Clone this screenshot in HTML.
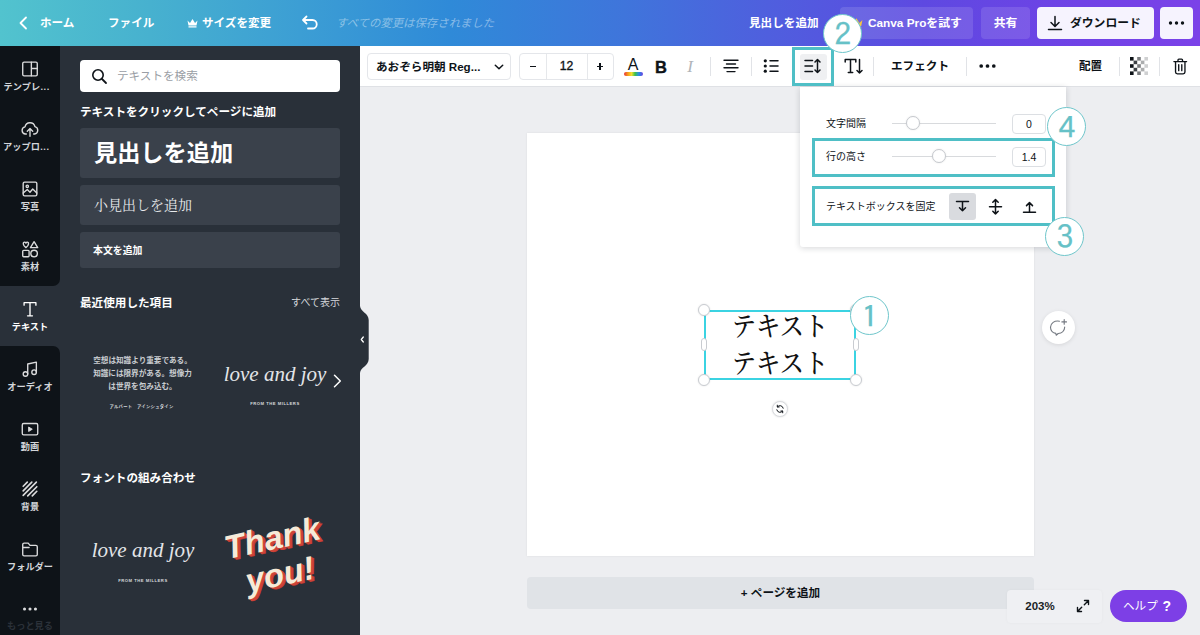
<!DOCTYPE html>
<html lang="ja">
<head>
<meta charset="utf-8">
<title>Canva</title>
<style>
*{box-sizing:border-box;margin:0;padding:0}
html,body{width:1200px;height:635px;overflow:hidden;background:#edeef1}
body{position:relative;font-family:"Liberation Sans","Noto Sans CJK JP",sans-serif;color:#0e1318;-webkit-font-smoothing:antialiased}
.abs{position:absolute}
.b{font-weight:700}
/* header */
#hdr{position:absolute;left:0;top:0;width:1200px;height:46px;background:linear-gradient(90deg,#52c3ce 0%,#47b1cf 12.5%,#3c9ed4 25%,#2f8ad8 37.5%,#3f75db 52%,#4f5fde 64%,#5e49e1 77%,#7042e6 90%,#7b42e8 100%)}
#hdr .t{position:absolute;top:0;height:46px;line-height:46px;color:#fff;font-size:11.6px;font-weight:700;white-space:nowrap}
.hbtn{position:absolute;top:7px;height:32px;border-radius:4px;background:rgba(255,255,255,.12);color:#fff;font-size:11.8px;font-weight:700;line-height:32px;white-space:nowrap}
.hbtn.w{background:#f6f3fe;color:#0e1318}
/* left nav */
#nav{position:absolute;left:0;top:46px;width:60px;height:589px;background:#293039}
#nav .dk{position:absolute;left:0;width:60px;background:#0e1318}
#nav .it{position:absolute;left:0;width:60px;height:60px;text-align:center;color:#d3d6da;font-size:9.200px;font-weight:700}
#nav .it .lb{position:absolute;left:0;width:60px;top:33.500px;line-height:14px;white-space:nowrap}
#nav .it.sel{color:#fff}
#nav .it svg{opacity:.85}
#nav .it.sel svg{opacity:1}
#nav .it svg{position:absolute;left:20px;top:13px;width:20px;height:20px}

/* side panel */
#side{position:absolute;left:60px;top:46px;width:300px;height:589px;background:#293039;color:#fff}
.card{position:absolute;left:20px;width:260px;background:#3a414b;border-radius:3px}
/* toolbar */
#tb{position:absolute;left:360px;top:46px;width:840px;height:41px;background:#fff;border-bottom:1px solid #dfe1e5}
.dv{position:absolute;top:11px;width:1px;height:19px;background:#e1e3e7}
.tt{position:absolute;top:0;height:40px;line-height:40px;font-size:12px;font-weight:700;white-space:nowrap}
/* canvas */
#page{position:absolute;left:527px;top:133px;width:507px;height:423px;background:#fff;box-shadow:0 0 2px rgba(0,0,0,.08)}
.circ{position:absolute;width:39px;height:39px;border-radius:50%;background:#fff;border:1.3px solid #6fc6cb;color:#66c1c7;text-align:center;font-size:31px;line-height:40px;font-weight:400;font-family:"IPAGothic",sans-serif;-webkit-text-stroke:.25px #66c1c7}
.circ span{display:inline-block;transform:scaleX(1.08)}
.hl{position:absolute;border:3px solid #4fbfc6}
.hd{position:absolute;width:12px;height:12px;border-radius:50%;background:#fff;border:1px solid #c9ccd1;box-shadow:0 0 2px rgba(0,0,0,.12)}
.hp{position:absolute;width:6px;height:13px;border-radius:3px;background:#fff;border:1px solid #c9ccd1}
.kn{position:absolute;width:14px;height:14px;border-radius:50%;background:#fff;border:1px solid #c6c9ce;box-shadow:0 0 2px rgba(0,0,0,.1)}
.vb{position:absolute;width:34px;height:20px;border:1px solid #dcdfe3;border-radius:4px;text-align:center;line-height:18px;font-size:10.500px;font-family:"Liberation Sans",sans-serif}
</style>
</head>
<body>

<!-- canvas area -->
<div id="page"></div>

<!-- selected text box -->
<div class="abs" style="left:704px;top:310px;width:152px;height:70px;border:2px solid #3bd3e2"></div>
<div class="abs" style="left:704px;top:308.500px;width:152px;text-align:center;font-family:'Liberation Serif','Noto Serif CJK SC',serif;font-size:27px;font-weight:500;line-height:37.500px;color:#111;white-space:nowrap;transform:scaleX(.9)">テキスト<br>テキスト</div>
<div class="hd" style="left:698px;top:304px"></div><div class="hd" style="left:850px;top:304px"></div>
<div class="hd" style="left:698px;top:374px"></div><div class="hd" style="left:850px;top:374px"></div>
<div class="hp" style="left:701px;top:338px"></div><div class="hp" style="left:853px;top:338px"></div>
<!-- rotate handle -->
<div class="abs" style="left:772px;top:401px;width:16px;height:16px;border-radius:50%;background:#fff;border:1px solid #d9dbdf;box-shadow:0 0 2px rgba(0,0,0,.15)">
  <svg class="abs" style="left:2px;top:2px" width="10" height="10" viewBox="0 0 10 10"><path d="M8.200 4.200A3.300 3.300 0 0 0 2.500 2.800 M1.800 5.800A3.300 3.300 0 0 0 7.500 7.200 M2.300 1.200V3H4.100 M7.700 8.800V7H5.900" fill="none" stroke="#0e1318" stroke-width="1" stroke-linecap="round" stroke-linejoin="round"/></svg>
</div>
<!-- comment button -->
<div class="abs" style="left:1041.500px;top:310.500px;width:33px;height:33px;border-radius:50%;background:#fff;box-shadow:0 1px 4px rgba(0,0,0,.10)">
  <svg class="abs" style="left:7px;top:7px" width="19" height="19" viewBox="0 0 19 19"><path d="M10.500 3.200C5.500 2.300 1.500 5.200 1.500 9.300C1.500 12.800 4.200 15 6.800 15.400L7.200 17.200L9.200 15.500C12.800 15.300 15.600 12.800 15.700 9" fill="none" stroke="#747981" stroke-width="1.150" stroke-linecap="round" stroke-linejoin="round"/><path d="M15.200 1.600V6.200 M12.900 3.900H17.500" stroke="#747981" stroke-width="1.150" stroke-linecap="round"/></svg>
</div>

<!-- add page -->
<div class="abs b" style="left:527px;top:577px;width:507px;height:32px;border-radius:4px;background:#e0e3e7;text-align:center;line-height:32px;font-size:11.600px">+ ページを追加</div>
<!-- zoom -->
<div class="abs" style="left:1006.500px;top:589.500px;width:95.500px;height:33px;border-radius:4px;background:#eff0f3;box-shadow:0 0 3px rgba(0,0,0,.04)">
  <div class="abs" style="left:15.500px;top:0;width:36px;text-align:center;line-height:33px;font-size:11.500px;font-weight:700;color:#1a1f25">203%</div>
  <svg class="abs" style="left:69px;top:9.500px" width="14" height="14" viewBox="0 0 14 14"><path d="M8.500 1.500H12.500V5.500 M12.500 1.500L8.300 5.700 M5.500 12.500H1.500V8.500 M1.500 12.500L5.700 8.300" fill="none" stroke="#0e1318" stroke-width="1.400" stroke-linecap="round" stroke-linejoin="round"/></svg>
</div>
<!-- help -->
<div class="abs" style="left:1110px;top:590px;width:77px;height:32px;border-radius:16px;background:#7d3fe6;color:#fff">
  <div class="abs" style="left:13px;top:0;line-height:32px;font-size:11.600px;white-space:nowrap">ヘルプ</div>
  <div class="abs b" style="left:52.500px;top:0;line-height:32px;font-size:14px;font-family:'Liberation Sans',sans-serif">?</div>
</div>

<!-- header -->
<div id="hdr">
  <svg class="abs" style="left:18px;top:16px" width="10" height="14" viewBox="0 0 10 14"><path d="M8 1.5L2.5 7L8 12.5" fill="none" stroke="#fff" stroke-width="1.8" stroke-linecap="round" stroke-linejoin="round"/></svg>
  <div class="t" style="left:40px">ホーム</div>
  <div class="t" style="left:108px">ファイル</div>
  <svg class="abs" style="left:187px;top:18px" width="11" height="10" viewBox="0 0 11 10"><path d="M0.5 2.5L3 5L5.5 1L8 5L10.5 2.5L9.5 7.5H1.5Z M1.5 8.3H9.5V9.5H1.5Z" fill="#fff"/></svg>
  <div class="t" style="left:202px">サイズを変更</div>
  <svg class="abs" style="left:301px;top:15px" width="18" height="16" viewBox="0 0 18 16"><path d="M5.5 1.5L2 5L5.5 8.5 M2.5 5H11.5A4.2 4.2 0 0 1 11.5 13.5H7" fill="none" stroke="#fff" stroke-width="1.8" stroke-linecap="round" stroke-linejoin="round"/></svg>
  <div class="t" style="left:336px;font-size:11.4px;font-weight:400;font-style:italic;color:rgba(255,255,255,.42)">すべての変更は保存されました</div>
  <div class="t" style="left:749px">見出しを追加</div>
  <div class="hbtn" style="left:840px;width:133px"><svg class="abs" style="left:10px;top:10px" width="13" height="12" viewBox="0 0 11 10"><path d="M0.5 2.5L3 5L5.5 1L8 5L10.5 2.5L9.5 7.5H1.5Z M1.5 8.3H9.5V9.5H1.5Z" fill="#f8c63d"/></svg><span class="abs" style="left:28px">Canva Proを試す</span></div>
  <div class="hbtn" style="left:981px;width:49px;text-align:center">共有</div>
  <div class="hbtn w" style="left:1037px;width:117px"><svg class="abs" style="left:10px;top:8px" width="16" height="16" viewBox="0 0 16 16"><path d="M8 1.5V11 M4 7.5L8 11.5L12 7.5 M1.5 14.5H14.5" fill="none" stroke="#0e1318" stroke-width="1.5" stroke-linecap="round" stroke-linejoin="round"/></svg><span class="abs" style="left:33px">ダウンロード</span></div>
  <div class="hbtn w" style="left:1160px;width:33px"><svg class="abs" style="left:8px;top:14px" width="17" height="4" viewBox="0 0 17 4"><circle cx="2.5" cy="2" r="1.7" fill="#0e1318"/><circle cx="8.5" cy="2" r="1.7" fill="#0e1318"/><circle cx="14.5" cy="2" r="1.7" fill="#0e1318"/></svg></div>
</div>

<!-- nav -->
<div id="nav">
  <div class="dk" style="top:0;height:240px;border-radius:0 0 7px 0"></div>
  <div class="dk" style="top:300px;height:289px;border-radius:0 7px 0 0"></div>
  <div class="it" style="top:0px"><svg viewBox="0 0 22 22"><rect x="3" y="3.5" width="16" height="15" rx="1.5" fill="none" stroke="#fff" stroke-width="1.5" stroke-linecap="round" stroke-linejoin="round"/><path d="M12.5 3.5V18.5 M12.5 10.5H19" fill="none" stroke="#fff" stroke-width="1.5" stroke-linecap="round" stroke-linejoin="round"/></svg><div class="lb" style="text-align:left;left:3.500px;letter-spacing:.1px">テンプレ<span style="letter-spacing:.6px">...</span></div></div>
  <div class="it" style="top:60px"><svg viewBox="0 0 22 22"><path d="M7 16.5H6A4 4 0 0 1 5.5 8.6A5.6 5.6 0 0 1 16.4 8.3A4.2 4.2 0 0 1 16 16.5H15 M11 19V11 M8 13.5L11 10.5L14 13.5" fill="none" stroke="#fff" stroke-width="1.5" stroke-linecap="round" stroke-linejoin="round"/></svg><div class="lb" style="text-align:left;left:3px;letter-spacing:.1px">アップロ<span style="letter-spacing:.6px">...</span></div></div>
  <div class="it" style="top:120px"><svg viewBox="0 0 22 22"><rect x="3.5" y="3.5" width="15" height="15" rx="1.5" fill="none" stroke="#fff" stroke-width="1.5" stroke-linecap="round" stroke-linejoin="round"/><circle cx="8" cy="8" r="1.3" fill="none" stroke="#fff" stroke-width="1.5" stroke-linecap="round" stroke-linejoin="round"/><path d="M3.5 15.5L8 11.5L11 14.5L14 11L18.5 15.5" fill="none" stroke="#fff" stroke-width="1.5" stroke-linecap="round" stroke-linejoin="round"/></svg><div class="lb">写真</div></div>
  <div class="it" style="top:180px"><svg viewBox="0 0 22 22"><path d="M6.5 9.5C3 7 3 3.5 5 3.5C6 3.5 6.5 4.5 6.5 4.5C6.500 4.5 7 3.500 8 3.500C10 3.500 10 7 6.500 9.500Z M15.500 3L19.500 9.500H11.500Z" fill="none" stroke="#fff" stroke-width="1.5" stroke-linecap="round" stroke-linejoin="round"/><rect x="3" y="12.500" width="7" height="7" rx="1" fill="none" stroke="#fff" stroke-width="1.5" stroke-linecap="round" stroke-linejoin="round"/><circle cx="15.500" cy="16" r="3.600" fill="none" stroke="#fff" stroke-width="1.5" stroke-linecap="round" stroke-linejoin="round"/></svg><div class="lb">素材</div></div>
  <div class="it sel" style="top:240px"><svg viewBox="0 0 22 22"><path d="M4.500 6.800V4H17.500V6.800 M11 4V18.500 M8.300 18.500H13.700" fill="none" stroke="#fff" stroke-width="1.500" stroke-linecap="round" stroke-linejoin="round"/></svg><div class="lb">テキスト</div></div>
  <div class="it" style="top:300px"><svg viewBox="0 0 22 22"><path d="M8.500 16.500V5.500L18 3.500V14.500" fill="none" stroke="#fff" stroke-width="1.5" stroke-linecap="round" stroke-linejoin="round"/><circle cx="6" cy="16.500" r="2.500" fill="none" stroke="#fff" stroke-width="1.5" stroke-linecap="round" stroke-linejoin="round"/><circle cx="15.500" cy="14.500" r="2.500" fill="none" stroke="#fff" stroke-width="1.5" stroke-linecap="round" stroke-linejoin="round"/></svg><div class="lb">オーディオ</div></div>
  <div class="it" style="top:360px"><svg viewBox="0 0 22 22"><rect x="2.500" y="5" width="17" height="12.500" rx="1.500" fill="none" stroke="#fff" stroke-width="1.5" stroke-linecap="round" stroke-linejoin="round"/><path d="M9.500 8.800V13.700L13.500 11.250Z" fill="#fff" stroke="#fff" stroke-width="1" stroke-linejoin="round"/></svg><div class="lb">動画</div></div>
  <div class="it" style="top:420px"><svg viewBox="0 0 22 22"><path d="M3.500 8L8 3.500 M3.500 13L13 3.500 M3.500 18L18 3.500 M8.500 18.500L18.500 8.500 M13.500 18.500L18.500 13.500" fill="none" stroke="#fff" stroke-width="1.800" stroke-linecap="round"/></svg><div class="lb">背景</div></div>
  <div class="it" style="top:480px"><svg viewBox="0 0 22 22"><path d="M3 6V17A1.500 1.500 0 0 0 4.500 18.500H17.500A1.500 1.500 0 0 0 19 17V8.500A1.500 1.500 0 0 0 17.500 7H11L9 4.500H4.500A1.500 1.500 0 0 0 3 6Z M3 9.300H10" fill="none" stroke="#fff" stroke-width="1.5" stroke-linecap="round" stroke-linejoin="round"/></svg><div class="lb">フォルダー</div></div>
  <div class="it" style="top:540px;opacity:1"><svg viewBox="0 0 22 22"><circle cx="5" cy="11" r="1.700" fill="#fff"/><circle cx="11" cy="11" r="1.700" fill="#fff"/><circle cx="17" cy="11" r="1.700" fill="#fff"/></svg><div class="lb" style="color:#2b3139;top:33px">もっと見る</div></div>
</div>

<!-- side -->
<div id="side">
  <div class="abs" style="left:20px;top:14px;width:260px;height:32px;background:#fff;border-radius:4px">
    <svg class="abs" style="left:11px;top:8px" width="17" height="17" viewBox="0 0 17 17"><circle cx="7" cy="7" r="5.2" fill="none" stroke="#0e1318" stroke-width="1.6"/><path d="M11 11L15 15" stroke="#0e1318" stroke-width="1.8" stroke-linecap="round"/></svg>
    <div class="abs" style="left:37px;top:0;line-height:32px;font-size:11.600px;color:#9a9ea5;white-space:nowrap">テキストを検索</div>
  </div>
  <div class="abs b" style="left:20px;top:57px;line-height:18px;font-size:11.6px;white-space:nowrap">テキストをクリックしてページに追加</div>
  <div class="card" style="top:82px;height:50px"><div class="abs b" style="left:14px;top:0;line-height:50px;font-size:23.200px;white-space:nowrap">見出しを追加</div></div>
  <div class="card" style="top:139px;height:40px"><div class="abs" style="left:14px;top:0;line-height:41px;font-size:14px;white-space:nowrap;font-family:'Liberation Serif','Noto Serif CJK SC',serif;color:#e8eaec">小見出しを追加</div></div>
  <div class="card" style="top:186px;height:36px"><div class="abs b" style="left:13px;top:0;line-height:37px;font-size:9.900px;white-space:nowrap">本文を追加</div></div>
  <div class="abs b" style="left:20px;top:247.500px;line-height:18px;font-size:11.6px;white-space:nowrap">最近使用した項目</div>
  <div class="abs" style="right:20px;top:247.500px;line-height:18px;font-size:10px;white-space:nowrap;color:#d5d8dc">すべて表示</div>

  <!-- thumb 1 -->
  <div class="abs b" style="left:21px;top:307.500px;width:123px;text-align:center;font-size:7.600px;line-height:13.250px;color:#c9cdd1;white-space:nowrap">空想は知識より重要である。<br>知識には限界がある。想像力<br>は世界を包み込む。</div>
  <div class="abs b" style="left:20px;top:356.500px;width:123px;text-align:center;font-size:4.300px;line-height:8px;letter-spacing:.3px;color:#d6d9dc;white-space:nowrap">アルバート　アインシュタイン</div>
  <!-- thumb 2 -->
  <div class="abs" style="left:160px;top:313px;width:110px;text-align:center;font-size:21px;line-height:30px;font-style:italic;font-family:'Liberation Serif',serif;color:#e3e5e8;white-space:nowrap">love and joy</div>
  <div class="abs b" style="left:160px;top:353.500px;width:110px;text-align:center;font-size:4.200px;line-height:8px;letter-spacing:.5px;color:#d6d9dc;white-space:nowrap">FROM THE MILLERS</div>
  <svg class="abs" style="left:273px;top:328px" width="9" height="14" viewBox="0 0 9 14"><path d="M1.500 1.200L7.300 7L1.500 12.800" fill="none" stroke="#fff" stroke-width="1.5" stroke-linecap="round" stroke-linejoin="round"/></svg>

  <div class="abs b" style="left:20px;top:423px;line-height:18px;font-size:11.6px;white-space:nowrap">フォントの組み合わせ</div>
  <!-- thumb 3 -->
  <div class="abs" style="left:28px;top:489px;width:110px;text-align:center;font-size:21px;line-height:30px;font-style:italic;font-family:'Liberation Serif',serif;color:#e3e5e8;white-space:nowrap">love and joy</div>
  <div class="abs b" style="left:28px;top:530.500px;width:110px;text-align:center;font-size:4.200px;line-height:8px;letter-spacing:.5px;color:#d6d9dc;white-space:nowrap">FROM THE MILLERS</div>
  <!-- thumb 4 -->
  <div class="abs" style="left:158px;top:473px;width:116px;text-align:center;transform:rotate(-12deg);font-family:'Liberation Sans',sans-serif;font-style:italic;font-weight:700;font-size:33px;line-height:37px;color:#f6ead8;text-shadow:1px 1px 0 #cf4439,2px 2px 0 #cf4439,2.500px 2.500px 0 #b9382f;white-space:nowrap">Thank<br>you!</div>
</div>
<!-- collapse handle -->
<svg class="abs" style="left:359px;top:306px" width="12" height="67" viewBox="0 0 12 67"><path d="M0 0H1C1.500 6 9.700 7 9.700 14V53C9.700 60 1.500 61 1 67H0Z" fill="#293039"/><path d="M4.300 31L2.300 33.500L4.300 36" fill="none" stroke="#fff" stroke-width="1.300" stroke-linecap="round" stroke-linejoin="round"/></svg>

<!-- toolbar -->
<div id="tb">
  <div class="abs" style="left:7px;top:7px;width:144px;height:27px;border:1px solid #e4e6ea;border-radius:4px">
    <div class="abs b" style="left:8px;top:0;line-height:25px;font-size:11.6px;white-space:nowrap">あおぞら明朝 Reg...</div>
    <svg class="abs" style="left:126px;top:9.500px" width="10" height="7" viewBox="0 0 10 7"><path d="M1.300 1.200L5 4.800L8.700 1.200" fill="none" stroke="#0e1318" stroke-width="1.500" stroke-linecap="round" stroke-linejoin="round"/></svg>
  </div>
  <div class="abs" style="left:159px;top:7px;width:95px;height:27px;border:1px solid #e4e6ea;border-radius:4px">
    <div class="abs" style="left:26px;top:0;width:1px;height:25px;background:#e6e8eb"></div>
    <div class="abs" style="left:67px;top:0;width:1px;height:25px;background:#e6e8eb"></div>
    <div class="abs" style="left:9.500px;top:12px;width:6.800px;height:1.400px;background:#0e1318"></div>
    <div class="abs" style="left:26px;top:0;width:41px;text-align:center;line-height:25px;font-size:12.200px;-webkit-text-stroke:.35px #0e1318">12</div>
    <div class="abs" style="left:76.700px;top:12px;width:6.600px;height:1.400px;background:#0e1318"></div>
    <div class="abs" style="left:79.300px;top:9.400px;width:1.400px;height:6.600px;background:#0e1318"></div>
  </div>
  <!-- color A -->
  <div class="abs" style="left:264px;top:9.500px;width:18px;text-align:center;line-height:18px;font-size:16px;font-family:'Liberation Sans',sans-serif">A</div>
  <div class="abs" style="left:263.500px;top:25.500px;width:19.500px;height:4px;border-radius:2px;background:linear-gradient(90deg,#e8303a 0%,#f6a21a 22%,#f2e032 40%,#3cc24a 58%,#2a8fe8 78%,#6a3de0 100%)"></div>
  <div class="abs b" style="left:293px;top:11px;width:16px;text-align:center;line-height:20px;font-size:16.500px;font-family:'Liberation Sans',sans-serif;-webkit-text-stroke:.4px #0e1318">B</div>
  <div class="abs" style="left:322px;top:11px;width:16px;text-align:center;line-height:20px;font-size:17px;font-style:italic;color:#b0b4b9;font-family:'Liberation Serif',serif">I</div>
  <div class="dv" style="left:350px"></div>
  <svg class="abs" style="left:363px;top:13px" width="16" height="14" viewBox="0 0 16 14"><path d="M1 1.200H15 M3.500 5H12.500 M1 8.800H15 M4 12.600H12" fill="none" stroke="#0e1318" stroke-width="1.400" stroke-linecap="round"/></svg>
  <div class="dv" style="left:391px"></div>
  <svg class="abs" style="left:403px;top:13px" width="16" height="14" viewBox="0 0 16 14"><circle cx="2.300" cy="1.800" r="1.600" fill="#0e1318"/><circle cx="2.300" cy="7" r="1.600" fill="#0e1318"/><circle cx="2.300" cy="12.200" r="1.600" fill="#0e1318"/><path d="M7 1.800H15 M7 7H15 M7 12.200H15" fill="none" stroke="#0e1318" stroke-width="1.500" stroke-linecap="round"/></svg>
  <!-- spacing (active) -->
  <div class="abs" style="left:440px;top:8px;width:27px;height:26px;border-radius:3px;background:#eff0f2"></div>
  <svg class="abs" style="left:444px;top:12px" width="18" height="16" viewBox="0 0 18 16"><path d="M1 2.500H8.500 M1 8H8.500 M1 13.500H8.500 M13.500 1.500V14.500 M11 4L13.500 1.500L16 4 M11 12L13.500 14.500L16 12" fill="none" stroke="#0e1318" stroke-width="1.500" stroke-linecap="round" stroke-linejoin="round"/></svg>
  <!-- T down -->
  <svg class="abs" style="left:484px;top:12px" width="19" height="17" viewBox="0 0 19 17"><path d="M1.200 4V1.500H11.800V4 M6.500 1.500V14.500 M4.300 14.500H8.700" fill="none" stroke="#0e1318" stroke-width="1.500" stroke-linecap="round" stroke-linejoin="round"/><path d="M15.500 1.500V15 M13 12.500L15.500 15L18 12.500" fill="none" stroke="#0e1318" stroke-width="1.500" stroke-linecap="round" stroke-linejoin="round"/></svg>
  <div class="dv" style="left:513px"></div>
  <div class="tt" style="left:531px;font-size:11.600px">エフェクト</div>
  <div class="dv" style="left:606px"></div>
  <svg class="abs" style="left:619px;top:18px" width="17" height="4" viewBox="0 0 17 4"><circle cx="2.200" cy="2" r="1.850" fill="#0e1318"/><circle cx="8.500" cy="2" r="1.850" fill="#0e1318"/><circle cx="14.800" cy="2" r="1.850" fill="#0e1318"/></svg>
  <div class="tt" style="left:719px;font-size:11.600px">配置</div>
  <div class="dv" style="left:759px"></div>
  <svg class="abs" style="left:770px;top:11px" width="18" height="18" viewBox="0 0 18 18">
    <g fill="#0e1318"><rect x="0" y="0" width="3.600" height="3.600" opacity="1"/><rect x="7.200" y="0" width="3.600" height="3.600" opacity=".55"/><rect x="14.400" y="0" width="3.600" height="3.600" opacity=".2"/>
    <rect x="3.600" y="3.600" width="3.600" height="3.600" opacity=".8"/><rect x="10.800" y="3.600" width="3.600" height="3.600" opacity=".35"/>
    <rect x="0" y="7.200" width="3.600" height="3.600" opacity="1"/><rect x="7.200" y="7.200" width="3.600" height="3.600" opacity=".55"/><rect x="14.400" y="7.200" width="3.600" height="3.600" opacity=".2"/>
    <rect x="3.600" y="10.800" width="3.600" height="3.600" opacity=".8"/><rect x="10.800" y="10.800" width="3.600" height="3.600" opacity=".35"/>
    <rect x="0" y="14.400" width="3.600" height="3.600" opacity="1"/><rect x="7.200" y="14.400" width="3.600" height="3.600" opacity=".55"/><rect x="14.400" y="14.400" width="3.600" height="3.600" opacity=".2"/></g></svg>
  <div class="dv" style="left:799px"></div>
  <svg class="abs" style="left:813px;top:12px" width="14.500" height="17.200" viewBox="0 0 16 19"><path d="M1 4H15 M5.500 4V2.300A1 1 0 0 1 6.500 1.300H9.500A1 1 0 0 1 10.500 2.300V4 M2.800 4V15.500A2 2 0 0 0 4.800 17.500H11.200A2 2 0 0 0 13.200 15.500V4 M6.300 7.500V14 M9.700 7.500V14" fill="none" stroke="#0e1318" stroke-width="1.500" stroke-linecap="round" stroke-linejoin="round"/></svg>
</div>


<!-- popup -->
<div class="abs" style="left:800px;top:87px;width:266px;height:160px;background:#fff;border-radius:0 0 3px 3px;box-shadow:0 1px 6px rgba(20,30,40,.18)">
  <div class="abs" style="left:26px;top:28px;line-height:18px;font-size:10px;white-space:nowrap">文字間隔</div>
  <div class="abs" style="left:92px;top:35.500px;width:104px;height:1.500px;background:#d8dadd"></div>
  <div class="kn" style="left:106px;top:29px"></div>
  <div class="vb" style="left:212px;top:27px">0</div>

  <div class="abs" style="left:26px;top:61px;line-height:18px;font-size:10px;white-space:nowrap">行の高さ</div>
  <div class="abs" style="left:92px;top:68.500px;width:104px;height:1.500px;background:#d8dadd"></div>
  <div class="kn" style="left:132px;top:62px"></div>
  <div class="vb" style="left:212px;top:60px">1.4</div>

  <div class="abs" style="left:26px;top:111px;line-height:18px;font-size:10px;white-space:nowrap">テキストボックスを固定</div>
  <div class="abs" style="left:149px;top:106px;width:27px;height:27px;border-radius:3px;background:#d9dbdf"></div>
  <svg class="abs" style="left:155px;top:113px" width="15" height="14" viewBox="0 0 15 14"><path d="M1.500 1.500H13.500 M7.500 1.500V10.800 M4.500 7.800L7.500 10.800L10.500 7.800" fill="none" stroke="#0e1318" stroke-width="1.500" stroke-linecap="round" stroke-linejoin="round"/></svg>
  <svg class="abs" style="left:188px;top:111px" width="15" height="18" viewBox="0 0 15 18"><path d="M1.500 8.700H13.500 M7.500 1.500V15.900 M4.800 4.200L7.500 1.500L10.200 4.200 M4.800 13.200L7.500 15.900L10.200 13.200" fill="none" stroke="#0e1318" stroke-width="1.500" stroke-linecap="round" stroke-linejoin="round"/></svg>
  <svg class="abs" style="left:222px;top:113px" width="15" height="14" viewBox="0 0 15 14"><path d="M1.500 12.200H13.500 M7.500 12.200V2.600 M4.500 5.600L7.500 2.600L10.500 5.600" fill="none" stroke="#0e1318" stroke-width="1.500" stroke-linecap="round" stroke-linejoin="round"/></svg>
</div>

<!-- annotation highlights -->
<div class="hl" style="left:792px;top:47px;width:42px;height:39px"></div>
<div class="hl" style="left:812px;top:138px;width:243px;height:39px"></div>
<div class="hl" style="left:812px;top:186px;width:243px;height:40px"></div>
<!-- annotation circles -->
<div class="circ" style="left:823px;top:14px"><span>2</span></div>
<div class="circ" style="left:1047px;top:107px"><span>4</span></div>
<div class="circ" style="left:1045px;top:217px"><span>3</span></div>
<div class="circ" style="left:850px;top:296px"><span>1</span></div>
</body>
</html>
